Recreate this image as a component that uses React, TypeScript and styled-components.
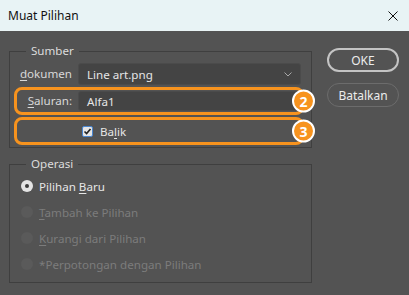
import React from 'react';
import styled, { createGlobalStyle } from 'styled-components';

const GlobalStyle = createGlobalStyle`
  html, body {
    margin: 0;
    padding: 0;
    background: #535353;
  }
  body {
    font-family: "Noto Sans", "Open Sans", sans-serif;
    font-size: 11.6px;
  }
`;

const Window = styled.div`
  width: 409px;
  height: 295px;
  display: flex;
  flex-direction: column;
  background: #535353;
  overflow: hidden;
`;

const TitleBar = styled.div`
  height: 31px;
  flex: none;
  display: flex;
  align-items: center;
  justify-content: space-between;
  padding: 0 10px 0 8px;
  background: #e8f3f5;
  color: #111;
  font-size: 12px;
`;

const CloseButton = styled.div`
  width: 12px;
  height: 12px;
  display: flex;
  align-items: center;
  justify-content: center;
`;

const Body = styled.div`
  display: flex;
  gap: 15px;
  padding: 12px 0 0 9px;
`;

const Groups = styled.div`
  width: 303px;
  display: flex;
  flex-direction: column;
  gap: 8px;
`;

const Group = styled.fieldset<{ $top: number; $bottom: number }>`
  margin: 0;
  min-width: 0;
  box-sizing: border-box;
  width: 303px;
  border: 1px solid #3f3f3f;
  padding: ${({ $top }) => $top}px 4px ${({ $bottom }) => $bottom}px 4px;
`;

const Legend = styled.legend`
  margin-left: 12px;
  padding: 0 5px;
  line-height: 16px;
  color: #dcdcdc;
`;

const Row = styled.div<{ $highlight?: boolean }>`
  position: relative;
  box-sizing: border-box;
  width: 290px;
  display: flex;
  align-items: center;
  gap: 6px;
  height: ${({ $highlight }) => ($highlight ? '28px' : '22px')};
  padding: ${({ $highlight }) => ($highlight ? '0' : '0 3px')};
  border: ${({ $highlight }) => ($highlight ? '3px solid #f7931e' : 'none')};
  border-radius: 8px;
  margin-bottom: 2px;
`;

const Label = styled.span`
  width: 55px;
  flex: none;
  text-align: right;
  color: #d8d8d8;
  line-height: 16px;
`;

const Field = styled.div<{ $tall?: boolean }>`
  box-sizing: border-box;
  width: 223px;
  height: ${({ $tall }) => ($tall ? '22px' : '20px')};
  display: flex;
  align-items: center;
  justify-content: space-between;
  padding: 0 8px;
  background: #444444;
  border: 1px solid #4b4b4b;
  border-radius: 3px;
  color: #e6e6e6;
`;

const CheckRow = styled.label`
  display: flex;
  align-items: center;
  gap: 7px;
  margin-left: 65px;
  color: #e6e6e6;
`;

const CheckBox = styled.span`
  width: 11px;
  height: 11px;
  box-sizing: border-box;
  border: 1px solid #4a86d0;
  border-radius: 2px;
  background: #e6e6e6;
  display: flex;
  align-items: center;
  justify-content: center;
`;

const Badge = styled.span`
  position: absolute;
  right: -14px;
  top: 50%;
  transform: translateY(-50%);
  width: 19px;
  height: 19px;
  border: 2px solid #fff;
  border-radius: 50%;
  background: #f7931e;
  color: #fff;
  font-weight: 700;
  font-size: 14px;
  line-height: 19px;
  text-align: center;
`;

const RadioRow = styled.div<{ $disabled?: boolean }>`
  height: 26px;
  display: flex;
  align-items: center;
  gap: 6px;
  padding-left: 7px;
  color: ${({ $disabled }) => ($disabled ? '#7c7c7c' : '#e6e6e6')};
`;

const Radio = styled.span<{ $checked?: boolean }>`
  width: 12px;
  height: 12px;
  border-radius: 50%;
  background: ${({ $checked }) => ($checked ? '#e4e4e4' : '#5a5a5a')};
  display: flex;
  align-items: center;
  justify-content: center;
  &::after {
    content: '';
    width: 4px;
    height: 4px;
    border-radius: 50%;
    background: ${({ $checked }) => ($checked ? '#3a3a3a' : 'transparent')};
  }
`;

const Buttons = styled.div`
  display: flex;
  flex-direction: column;
  gap: 11px;
  padding-top: 5px;
`;

const Button = styled.button<{ $primary?: boolean }>`
  width: 72px;
  height: 24px;
  box-sizing: border-box;
  border-radius: 12px;
  border: ${({ $primary }) => ($primary ? '2px solid #c4c4c4' : '1px solid #6c6c6c')};
  background: transparent;
  color: #ececec;
  font-family: inherit;
  font-size: 12px;
  padding: 0;
`;

const U = styled.span`
  text-decoration: underline;
  text-underline-offset: 2px;
`;

export default function App() {
  return (
    <Window>
      <GlobalStyle />
      <TitleBar>
        <span>Muat Pilihan</span>
        <CloseButton>
          <svg width="10" height="10" viewBox="0 0 10 10">
            <path d="M0.5 0.5L9.5 9.5M9.5 0.5L0.5 9.5" stroke="#111" strokeWidth="1" />
          </svg>
        </CloseButton>
      </TitleBar>
      <Body>
        <Groups>
          <Group $top={4} $bottom={0}>
            <Legend>Sumber</Legend>
            <Row>
              <Label><U>d</U>okumen</Label>
              <Field $tall>
                <span>Line art.png</span>
                <svg width="8" height="5" viewBox="0 0 8 5">
                  <path d="M0.5 0.5L4 4L7.5 0.5" stroke="#a8a8a8" fill="none" />
                </svg>
              </Field>
            </Row>
            <Row $highlight>
              <Label><U>S</U>aluran:</Label>
              <Field>Alfa1</Field>
              <Badge>2</Badge>
            </Row>
            <Row $highlight>
              <CheckRow>
                <CheckBox>
                  <svg width="9" height="9" viewBox="0 0 9 9">
                    <path d="M1.5 4.5L3.6 6.6L7.5 2" stroke="#222" strokeWidth="1.6" fill="none" />
                  </svg>
                </CheckBox>
                <span>Ba<U>l</U>ik</span>
              </CheckRow>
              <Badge>3</Badge>
            </Row>
          </Group>
          <Group $top={1} $bottom={5}>
            <Legend>Operasi</Legend>
            <RadioRow>
              <Radio $checked />
              <span>Pilihan <U>B</U>aru</span>
            </RadioRow>
            <RadioRow $disabled>
              <Radio />
              <span><U>T</U>ambah ke Pilihan</span>
            </RadioRow>
            <RadioRow $disabled>
              <Radio />
              <span><U>K</U>urangi dari Pilihan</span>
            </RadioRow>
            <RadioRow $disabled>
              <Radio />
              <span>*Perpotongan dengan Pilihan</span>
            </RadioRow>
          </Group>
        </Groups>
        <Buttons>
          <Button $primary>OKE</Button>
          <Button>Batalkan</Button>
        </Buttons>
      </Body>
    </Window>
  );
}
